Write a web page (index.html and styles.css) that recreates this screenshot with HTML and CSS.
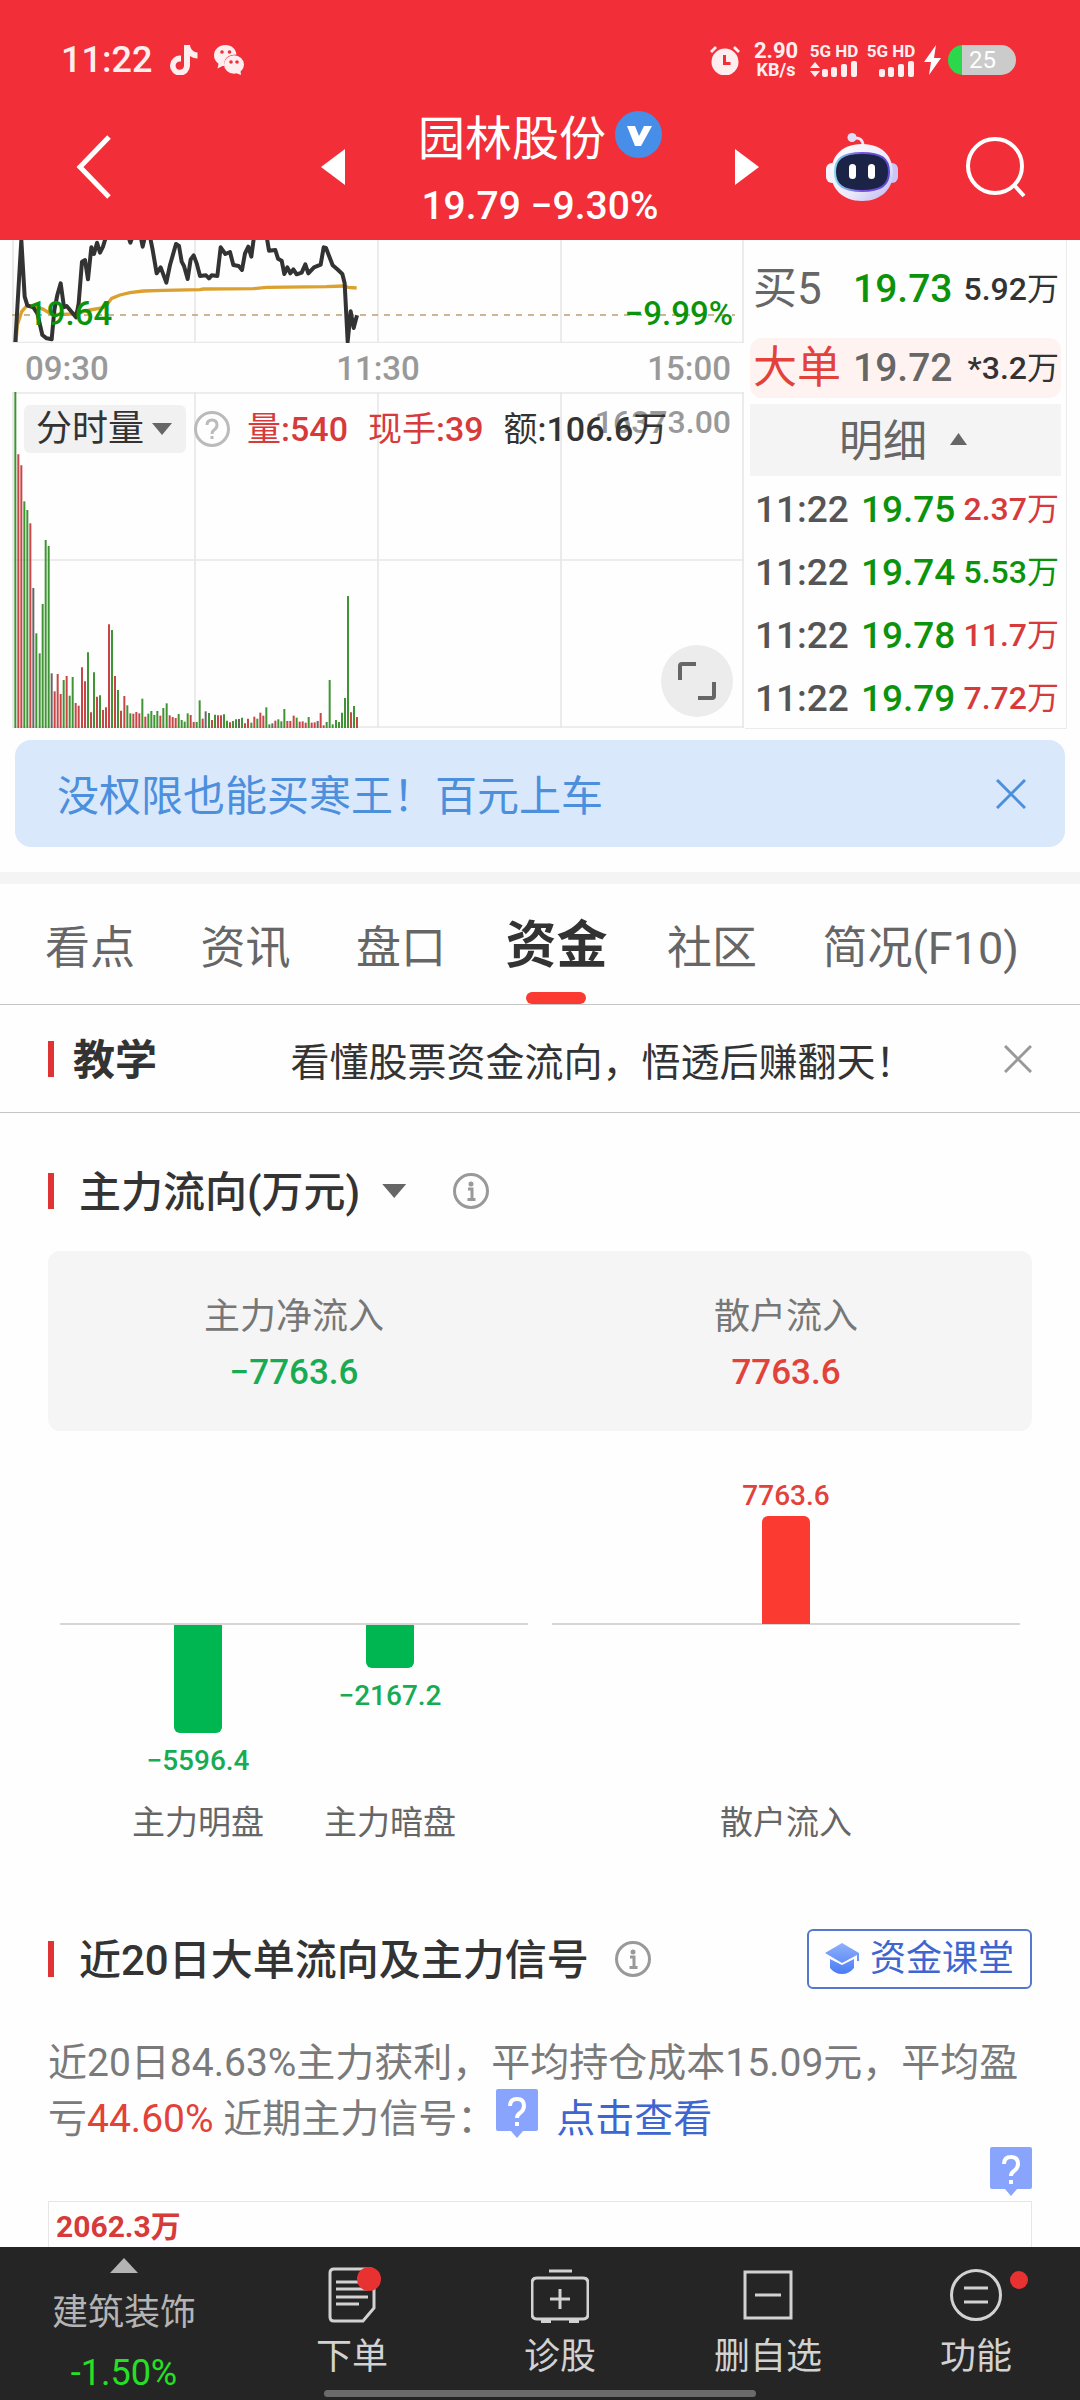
FILE: index.html
```html
<!DOCTYPE html>
<html lang="zh-CN">
<head>
<meta charset="utf-8">
<meta name="viewport" content="width=device-width, initial-scale=1">
<title>园林股份</title>
<link rel="stylesheet" href="styles.css">
</head>
<body>
<header class="top">
  <div class="status">
    <div class="status-side">
      <span class="clock">11:22</span>
      <svg class="app-icon" width="28" height="30" viewBox="0 0 28 30"><path d="M14 0h6c.4 4 3 7 7.500 7.400v6C24.500 13.400 22 12.500 20 11v9.500A10 10 0 1 1 11 10.600v6a4.200 4.200 0 1 0 3 4z"/></svg>
      <svg class="app-icon wechat" width="30" height="30" viewBox="0 0 30 30"><path d="M11.500 0C5 0 0 4.500 0 10.500c0 3.400 1.800 6.200 4.500 8.200L3.500 23.500l5-2.600h2C9 14 14 9.500 22.500 9.500 22 4 17.500 0 11.500 0z"/><ellipse cx="20" cy="19.500" rx="10" ry="9.300"/><path d="M22 28l5 2-.6-4.500z"/><g class="cut"><circle cx="8" cy="7" r="1.800"/><circle cx="15.500" cy="7" r="1.800"/><circle cx="17" cy="17" r="1.800"/><circle cx="23" cy="17" r="1.800"/></g></svg>
    </div>
    <div class="status-side">
      <svg class="app-icon" width="30" height="30" viewBox="0 0 30 30"><circle cx="15" cy="17" r="13.500"/><path d="M0 6L5 1l2 2-5 5zM30 6l-5-5-2 2 5 5z"/><path class="hand" d="M14.500 10v8.500h6"/></svg>
      <span class="speed"><b>2.90</b><small>KB/s</small></span>
      <span class="signal"><b>5G HD</b>
        <svg width="48" height="16" viewBox="0 0 48 16"><path d="M0 7l5-6 5 6zM0 10l5 6 5-6z"/><rect x="12" y="8" width="6" height="8" rx="2"/><rect x="21" y="6" width="6" height="10" rx="2"/><rect x="31" y="3" width="6" height="13" rx="2"/><rect x="41" width="6" height="16" rx="2"/></svg></span>
      <span class="signal"><b>5G HD</b>
        <svg width="48" height="16" viewBox="0 0 48 16"><rect x="12" y="8" width="6" height="8" rx="2"/><rect x="21" y="6" width="6" height="10" rx="2"/><rect x="31" y="3" width="6" height="13" rx="2"/><rect x="41" width="6" height="16" rx="2"/></svg></span>
      <svg class="bolt" width="18" height="30" viewBox="0 0 18 30"><path d="M12 0L0 17h7L5 30l12-17h-7z"/></svg>
      <span class="battery">25</span>
    </div>
  </div>
  <div class="title-bar">
    <div class="side side-left">
      <button class="icon-btn" aria-label="返回"><svg width="36" height="64" viewBox="0 0 36 64"><path class="line" d="M33 2L4 32l29 30"/></svg></button>
      <button class="icon-btn" aria-label="上一只"><svg width="24" height="36" viewBox="0 0 24 36"><path class="solid" d="M24 0v36L0 18z"/></svg></button>
    </div>
    <div class="stock">
      <h1>园林股份<svg width="47" height="47" viewBox="0 0 47 47"><circle cx="23.500" cy="23.500" r="23.500" fill="#468ee8"/><path fill="#fff" d="M12 15h8l4 10 5-10h8L26 35h-6z"/></svg></h1>
      <p>19.79 −9.30%</p>
    </div>
    <div class="side side-right">
      <button class="icon-btn" aria-label="下一只"><svg width="24" height="36" viewBox="0 0 24 36"><path class="solid" d="M0 0v36l24-18z"/></svg></button>
      <button class="icon-btn robot" aria-label="智能助手"><svg width="72" height="68" viewBox="0 0 72 68">
        <defs><linearGradient id="shell" x2="1" y2="1"><stop offset="0" stop-color="#fff"/><stop offset=".6" stop-color="#ece9fb"/><stop offset="1" stop-color="#b9b4ee"/></linearGradient><linearGradient id="rim" x2="1"><stop offset="0" stop-color="#7fd8f0"/><stop offset=".5" stop-color="#7a4fe0"/><stop offset="1" stop-color="#5a4bd0"/></linearGradient></defs>
        <path d="M28 5q9-1 9 8" fill="none" stroke="#e9e4fa" stroke-width="3"/><circle cx="26" cy="4.500" r="4.500" fill="#e2ddf7"/>
        <rect y="30" width="12" height="20" rx="6" fill="#f4f2fd"/><rect x="60" y="30" width="12" height="20" rx="6" fill="#c9c5f4"/>
        <path d="M36 11c22 0 31 14 31 29S56 68 36 68 5 55 5 40s9-29 31-29z" fill="url(#shell)"/>
        <path d="M36 20c20 0 27 6 27 19S55 58 36 58 9 52 9 39s7-19 27-19z" fill="#1b2346" stroke="url(#rim)" stroke-width="2"/>
        <rect x="23" y="31" width="7" height="15" rx="3.500" fill="#fff"/><rect x="42" y="31" width="7" height="15" rx="3.500" fill="#fff"/></svg></button>
      <button class="icon-btn" aria-label="搜索"><svg width="60" height="62" viewBox="0 0 60 62"><circle class="line ring" cx="29" cy="30" r="27"/><path class="line ring" d="M48 49l10 11"/></svg></button>
    </div>
  </div>
</header>

<main class="content">
  <section class="quote">
    <div class="charts">
      <div class="price-chart">
        <svg class="plot" viewBox="0 30 2235 309" preserveAspectRatio="none">
          <path class="grid" d="M39 30V339M585 30V339M1134 30V339M1683 30V339M2229 30V339M36 338H2232"/>
          <path class="avg" d="M48 336L52 285 65 245 80 228 110 230 130 238 150 250 175 254 215 252 245 246 270 240 315 232 335 205 360 195 390 188 430 183 490 181 600 179 610 177 760 176 800 172 980 170 1030 168 1045 172 1070 174"/>
          <path class="dash" d="M36 255H2205"/>
          <path class="price" d="M46 336L64 30 74 200 82 226 100 232 112 250 127 315 140 325 155 328 163 240 172 195 182 160 192 232 200 228 210 240 228 262 236 220 246 95 255 90 264 148 274 52 282 72 291 38 300 68 309 50 318 20 385 20 391 38 398 20 422 20 428 50 435 20 450 20 458 60 470 130 482 112 499 158 510 105 528 42 537 48 545 95 552 108 563 147 572 88 581 76 590 100 600 138 618 136 627 145 635 136 652 138 662 52 676 72 690 66 700 105 716 108 726 120 735 70 745 50 754 80 762 20 800 20 807 62 826 60 834 86 845 92 853 132 862 112 871 130 880 118 890 133 905 128 916 103 925 130 942 112 962 104 971 52 978 54 998 106 1012 118 1027 132 1034 160 1043 335 1052 244 1061 294 1071 256"/>
        </svg>
        <div class="limits"><span>19.64</span><span>−9.99%</span></div>
      </div>
      <div class="times"><span>09:30</span><span>11:30</span><span>15:00</span></div>
      <div class="volume-chart">
        <svg class="plot" id="volume" viewBox="0 486 2235 1011" preserveAspectRatio="none">
          <path class="grid" d="M39 486V1494M585 486V1494M1134 486V1494M1683 486V1494M2229 486V1494M36 489H2232M36 990H2232M36 1491H2232"/>
        </svg>
        <span class="max">16373.00</span>
        <div class="legend">
          <button class="pick">分时量<i class="down"></i></button>
          <svg class="help" width="36" height="36" viewBox="0 0 36 36"><circle cx="18" cy="18" r="16.500"/><path d="M13 14q0-5 5-5t5 5q0 3-3 5-2 1.500-2 4M18 25v3"/></svg>
          <span class="up">量<b>:540</b></span><span class="up">现手<b>:39</b></span><span>额<b>:106.6</b>万</span>
        </div>
        <button class="expand" aria-label="全屏"><svg width="38" height="38" viewBox="0 0 38 38"><path d="M2 18V4q0-2 2-2h14M36 20v14q0 2-2 2H20"/></svg></button>
      </div>
    </div>
    <div class="book">
      <table class="bids">
        <tr><th scope="row">买5</th><td class="fall strong">19.73</td><td class="qty"><b>5.92</b>万</td></tr>
        <tr class="big"><th scope="row">大单</th><td class="strong">19.72</td><td class="qty"><b>*3.2</b>万</td></tr>
      </table>
      <button class="detail">明细<i class="tri"></i></button>
      <table class="ticks">
        <tr><td>11:22</td><td class="fall">19.75</td><td class="qty up"><b>2.37</b>万</td></tr>
        <tr><td>11:22</td><td class="fall">19.74</td><td class="qty fall"><b>5.53</b>万</td></tr>
        <tr><td>11:22</td><td class="fall">19.78</td><td class="qty up"><b>11.7</b>万</td></tr>
        <tr><td>11:22</td><td class="fall">19.79</td><td class="qty up"><b>7.72</b>万</td></tr>
      </table>
    </div>
  </section>

  <aside class="banner"><a href="#">没权限也能买寒王！百元上车</a><button aria-label="关闭"><svg width="30" height="30" viewBox="0 0 30 30"><path d="M1 1l28 28M29 1L1 29"/></svg></button></aside>

  <nav class="tabs">
    <a href="#">看点</a><a href="#">资讯</a><a href="#">盘口</a><a href="#" class="active">资金</a><a href="#">社区</a><a href="#">简况(F10)</a>
  </nav>

  <section class="lesson"><h2 class="mark">教学</h2><a href="#">看懂股票资金流向，悟透后赚翻天！</a><button aria-label="关闭"><svg width="28" height="28" viewBox="0 0 28 28"><path d="M1 1l26 26M27 1L1 27"/></svg></button></section>

  <section class="flow">
    <div class="heading">
      <h2 class="mark">主力流向(万元)</h2><i class="down"></i>
      <svg class="info" width="36" height="36" viewBox="0 0 36 36"><circle cx="18" cy="18" r="16.500"/><path d="M15 16h4v10M14.500 26.500h8"/><circle class="dot" cx="18" cy="11" r="2.500"/></svg>
    </div>
    <dl class="summary">
      <div class="wide"><dt>主力净流入</dt><dd class="out">−7763.6</dd></div>
      <div><dt>散户流入</dt><dd class="in">7763.6</dd></div>
    </dl>
    <div class="bars">
      <div class="group">
        <figure><div class="above"></div><div class="below"><div class="bar" style="height:108px"></div><span>−5596.4</span></div><figcaption>主力明盘</figcaption></figure>
        <figure><div class="above"></div><div class="below"><div class="bar" style="height:43px"></div><span>−2167.2</span></div><figcaption>主力暗盘</figcaption></figure>
      </div>
      <div class="group">
        <figure><div class="above"><span>7763.6</span><div class="bar" style="height:108px"></div></div><div class="below"></div><figcaption>散户流入</figcaption></figure>
      </div>
    </div>
  </section>

  <section class="signals">
    <div class="heading">
      <h2 class="mark">近20日大单流向及主力信号</h2>
      <svg class="info" width="36" height="36" viewBox="0 0 36 36"><circle cx="18" cy="18" r="16.500"/><path d="M15 16h4v10M14.500 26.500h8"/><circle class="dot" cx="18" cy="11" r="2.500"/></svg>
      <button class="course"><svg width="34" height="32" viewBox="0 0 34 32"><defs><linearGradient id="cap" x2="0" y2="1"><stop offset="0" stop-color="#8fb0fb"/><stop offset="1" stop-color="#4a7cf4"/></linearGradient></defs><path fill="url(#cap)" d="M17 0L0 10l17 10 15-8v6h2v-8zM5 16v9q5 6 12 6t12-6v-9l-12 6z"/></svg>资金课堂</button>
    </div>
    <p class="note">近20日84.63%主力获利，平均持仓成本15.09元，平均盈亏<em>44.60%</em> 近期主力信号：<svg class="q" width="42" height="49" viewBox="0 0 42 49"><path d="M2 0h38q2 0 2 2v38q0 2-2 2H27l-6 7-6-7H2q-2 0-2-2V2q0-2 2-2z"/><path class="ask" d="M14 17q0-7 7-7t7 7q0 4-4 7-3 2-3 5M21 33v4"/></svg><a href="#">点击查看</a></p>
    <div class="flag"><svg class="q" width="42" height="49" viewBox="0 0 42 49"><path d="M2 0h38q2 0 2 2v38q0 2-2 2H27l-6 7-6-7H2q-2 0-2-2V2q0-2 2-2z"/><path class="ask" d="M14 17q0-7 7-7t7 7q0 4-4 7-3 2-3 5M21 33v4"/></svg></div>
    <div class="trend"><span>2062.3万</span></div>
  </section>
</main>

<nav class="bottom">
  <a href="#" class="sector"><i class="tri"></i><span>建筑装饰</span><span class="change">-1.50%</span></a>
  <a href="#"><span class="ico"><svg width="48" height="56" viewBox="0 0 48 56"><path d="M6 2h36q4 0 4 4v35L35 54H6q-4 0-4-4V6q0-4 4-4zM8 15h26M8 22h32M8 30h32M8 37h23"/></svg><i class="badge large"></i></span><span>下单</span></a>
  <a href="#"><span class="ico"><svg width="58" height="56" viewBox="0 0 58 56"><path d="M6 11h46q5 0 5 5v31q0 5-5 5H6q-5 0-5-5V16q0-5 5-5zM18 4h23M29 22v20M19 32h20"/><path class="foot" d="M10 54h10M38 54h10"/></svg></span><span>诊股</span></a>
  <a href="#"><span class="ico"><svg width="50" height="56" viewBox="0 0 50 56"><path d="M2 5h46v46H2zM12 28h26"/></svg></span><span>删自选</span></a>
  <a href="#"><span class="ico"><svg width="52" height="56" viewBox="0 0 52 56"><circle cx="26" cy="28" r="24.500"/><path d="M14 21h24M14 35h24"/></svg><i class="badge"></i></span><span>功能</span></a>
  <div class="home"></div>
</nav>
<script src="volume.js"></script>
</body>
</html>
```
FILE: styles.css
```css
* { box-sizing: border-box; margin: 0; padding: 0; }
body {
  display: flex; flex-direction: column; height: 100vh;
  font-family: Roboto, "Noto Sans CJK SC", sans-serif;
  color: #333; background: #fefefe; overflow: hidden;
}
button { border: 0; background: none; font: inherit; color: inherit; cursor: pointer; }
a { color: inherit; text-decoration: none; }
svg { display: block; flex: none; fill: none; }
i { display: inline-block; flex: none; }
.up { color: #d63a3a; }
.fall { color: #0b930b; }
.down { width: 20px; height: 12px; background: #666; clip-path: polygon(0 0, 100% 0, 50% 100%); }
.tri { width: 17px; height: 12px; background: #666; clip-path: polygon(50% 0, 100% 100%, 0 100%); }

/* Header */
.top { flex: none; color: #fff; background: #f22f38; }
.status { display: flex; justify-content: space-between; height: 80px; padding: 40px 64px 0 61px; }
.status-side { display: flex; align-items: center; height: 40px; }
.clock { font-size: 36px; font-weight: 500; line-height: 40px; color: #ffeeef; margin-right: 18px; }
.app-icon { fill: #ffeeef; }
.wechat { margin-left: 16px; }
.cut { fill: #f22f38; }
.hand { fill: none; stroke: #f22f38; stroke-width: 3; }
.speed, .signal { display: flex; flex-direction: column; align-items: center; color: #ffeeef; }
.speed { width: 46px; margin: 0 11px 0 13px; }
.speed b { font-size: 22px; line-height: 20px; }
.speed small { font-size: 18px; line-height: 18px; font-weight: 700; }
.signal { width: 48px; margin-right: 9px; }
.signal b { font-size: 17px; line-height: 16px; margin-bottom: 2px; white-space: nowrap; }
.signal svg { fill: #ffeeef; }
.bolt { fill: #fff; margin-right: 6px; }
.battery {
  width: 68px; height: 30px; border-radius: 15px; padding-left: 21px;
  font-size: 24px; line-height: 30px;
  background: linear-gradient(90deg, #2bd84b 14px, #cbcbcb 14px);
}
.title-bar { display: grid; grid-template-columns: 1fr auto 1fr; gap: 73px; height: 160px; }
.side { display: flex; align-items: center; justify-content: space-between; padding-top: 14px; }
.side-left { padding-left: 76px; }
.side-right { padding-right: 54px; }
.robot { margin-left: -2px; }
.line { stroke: #fff; stroke-width: 5; }
.ring { stroke-width: 4; }
.solid { fill: #fff; }
.stock { display: flex; flex-direction: column; align-items: center; padding-top: 26px; }
.stock h1 { display: flex; gap: 9px; align-items: center; font-size: 47px; line-height: 66px; font-weight: 400; white-space: nowrap; }
.stock h1 svg { margin-bottom: 10px; }
.stock p { font-size: 39px; line-height: 46px; font-weight: 500; margin-top: 11px; }

.content { flex: 1 1 0; min-height: 0; overflow: hidden; }

/* Quote */
.quote { display: flex; height: 489px; }
.charts { flex: 1; min-width: 0; }
.plot { width: 100%; height: 100%; }
.grid { stroke: #e8e8e8; stroke-width: 5; }
.price { stroke: #333; stroke-width: 12; stroke-linejoin: round; }
.avg { stroke: #dba02d; stroke-width: 10; }
.dash { stroke: #bd9f6c; stroke-width: 5; stroke-dasharray: 18 18; }
.price-chart, .volume-chart { position: relative; }
.price-chart { height: 103px; }
.limits { position: absolute; inset: 54px 12px auto 28px; display: flex; justify-content: space-between; color: #0b930b; font-size: 33px; line-height: 40px; font-weight: 500; }
.times { display: flex; justify-content: space-between; height: 49px; padding: 0 14px 0 25px; font-size: 33px; line-height: 52px; font-weight: 500; color: #999; }
.volume-chart { height: 337px; }
.max { position: absolute; top: 10px; right: 14px; font-size: 32px; line-height: 40px; font-weight: 500; color: #999; }
.legend { position: absolute; top: 12px; left: 24px; display: flex; align-items: center; gap: 20px; font-size: 34px; line-height: 50px; white-space: nowrap; }
.legend b, .qty b { font-weight: 500; }
.pick { display: flex; align-items: center; gap: 8px; height: 48px; padding: 0 14px 0 12px; border-radius: 6px; background: #f1f1f1; font-size: 36px; }
.help { margin: 0 -3px 0 -12px; stroke: #bbb; stroke-width: 3; }
.expand { position: absolute; right: 12px; bottom: 12px; display: grid; place-items: center; width: 72px; height: 72px; border-radius: 50%; background: #ececec; }
.expand svg { stroke: #666; stroke-width: 4; }
.book { flex: none; width: 322px; margin-right: 13px; padding: 0 5px; border: solid #ebebeb; border-width: 0 1px 1px 0; }
table { width: 100%; border-spacing: 0; table-layout: fixed; font-weight: 500; }
td, th { text-align: left; white-space: nowrap; }
.bids th { width: 103px; padding-left: 3px; font-size: 44px; font-weight: 400; color: #666; }
.bids tr { height: 98px; line-height: 96px; }
.bids .big { height: 60px; line-height: 60px; background: #fff3f2; color: #666; }
.bids .big th { color: #e2423a; border-radius: 12px 0 0 12px; }
.bids .big .qty { border-radius: 0 12px 12px 0; }
.strong { width: 98px; font-size: 39px; }
.qty { text-align: right; font-size: 32px; font-weight: 400; padding-right: 2px; }
.bids .qty { color: #333; }
.detail { display: flex; align-items: center; justify-content: center; gap: 23px; width: 100%; height: 72px; margin-top: 6px; padding-right: 5px; background: #f4f4f4; color: #666; font-size: 44px; line-height: 72px; padding-top: 4px; }
.detail .tri { margin-bottom: 6px; }
.ticks { color: #555; font-size: 37px; }
.ticks tr { height: 63px; line-height: 59px; }
.ticks td { padding-top: 4px; }
.ticks td:first-child { width: 111px; padding-left: 5px; }
.ticks td:nth-child(2) { width: 95px; }
.ticks .qty { font-size: 32px; }

/* Banner */
.banner { display: flex; align-items: center; justify-content: space-between; height: 107px; margin: 11px 15px 25px; padding: 0 39px 0 42px; border-radius: 16px; background: #dae8fb; color: #4b8fdd; font-size: 42px; line-height: 60px; }
.banner a { padding-top: 6px; }
.banner svg { stroke: #4b8fdd; stroke-width: 3; }

/* Tabs */
.tabs { display: flex; align-items: center; justify-content: space-between; height: 133px; padding: 0 61px 0 45px; border-top: 12px solid #f4f4f4; border-bottom: 1px solid #c5c5c5; color: #666; font-size: 45px; white-space: nowrap; }
.tabs .active { position: relative; font-size: 51px; font-weight: 700; color: #333; height: 120px; line-height: 124px; margin: 0 -6px; }
.active::after { content: ""; position: absolute; left: 50%; bottom: 0; width: 60px; height: 12px; margin-left: -30px; border-radius: 6px; background: #fb3b31; }

.lesson { display: flex; align-items: center; justify-content: space-between; height: 108px; padding: 0 48px; border-bottom: 1px solid #c5c5c5; font-size: 39px; }
.lesson a { margin-right: -44px; }
.lesson svg { stroke: #999; stroke-width: 3; }
.mark { display: flex; align-items: center; gap: 25px; font-size: 42px; line-height: 60px; font-weight: 500; white-space: nowrap; padding-top: 4px; }
.mark::before { content: ""; width: 6px; height: 36px; margin-bottom: 4px; background: #e03434; }
.lesson .mark { gap: 19px; font-weight: 700; }

/* Capital flow */
.flow, .signals { padding: 0 48px; }
.heading { display: flex; align-items: center; height: 60px; }
.flow .heading { margin-top: 48px; }
.flow .down { width: 24px; height: 14px; margin: 0 47px 0 22px; }
.info { stroke: #999; stroke-width: 3; }
.dot { fill: #999; stroke: none; }
.summary { display: flex; height: 180px; margin-top: 30px; padding-top: 38px; border-radius: 12px; background: #f5f5f5; text-align: center; }
.summary div { flex: 1; }
.summary dt { color: #777; font-size: 36px; line-height: 56px; }
.summary dd { font-size: 35px; line-height: 56px; font-weight: 500; }
.out { color: #17ab54; }
.in { color: #e2423a; }
.bars { display: grid; grid-template-columns: 1fr 1fr; gap: 24px; padding: 0 12px; }
.group { display: flex; justify-content: center; gap: 64px; background: linear-gradient(#d6d6d6, #d6d6d6) 0 192px / 100% 2px no-repeat; }
.group figure { display: flex; flex-direction: column; width: 128px; text-align: center; }
.above, .below { display: flex; flex-direction: column; align-items: center; font-size: 28px; line-height: 40px; font-weight: 500; }
.above { justify-content: flex-end; height: 193px; color: #e2423a; }
.below { height: 175px; padding-top: 1px; color: #17ab54; }
.below span { margin-top: 8px; }
.above .bar { width: 48px; border-radius: 6px 6px 0 0; background: #fb3b31; }
.below .bar { width: 48px; border-radius: 0 0 6px 6px; background: #00b650; }
figcaption { align-self: center; color: #666; font-size: 33px; line-height: 48px; white-space: nowrap; }

/* Signals */
.signals .heading { margin-top: 82px; }
.signals .info { margin-left: 26px; }
.course { display: flex; align-items: center; gap: 11px; height: 60px; margin-left: auto; padding: 0 16px; border: 2px solid #5478cc; border-radius: 6px; color: #3f66d0; font-size: 36px; line-height: 56px; white-space: nowrap; }
.note { margin-top: 46px; color: #7a7a7a; font-size: 39px; line-height: 56px; }
.note em { color: #e2423a; font-style: normal; }
.note a { color: #3f66d0; margin-left: 18px; }
.q { fill: #88a4fc; }
.note .q { display: inline-block; vertical-align: 14px; margin: -20px 0; }
.ask { stroke: #fff; stroke-width: 4; }
.flag { display: flex; justify-content: flex-end; margin-bottom: 5px; }
.trend { height: 400px; padding: 5px 7px; border: 1px solid #e6e6e6; color: #d63a3a; font-size: 30px; line-height: 40px; font-weight: 700; }

/* Bottom bar */
.bottom { position: relative; flex: none; display: grid; grid-template-columns: 248px repeat(4, 1fr); height: 153px; background: #252525; color: #d2d2d2; font-size: 36px; line-height: 48px; }
.bottom a { display: flex; flex-direction: column; align-items: center; padding-top: 20px; }
.bottom .sector { padding: 11px 0 0; color: #b4b4b4; }
.sector .tri { width: 28px; height: 15px; margin-bottom: 16px; background: #b4b4b4; }
.sector .change { margin-top: 12px; color: #25e025; }
.ico { position: relative; margin-bottom: 10px; }
.ico svg { stroke: #d2d2d2; stroke-width: 3; }
.foot { stroke-width: 4; }
.badge { position: absolute; top: 4px; right: -26px; width: 18px; height: 18px; border-radius: 50%; background: #e83232; }
.large { top: 0; right: -5px; width: 24px; height: 24px; }
.home { position: absolute; left: 30%; right: 30%; bottom: 3px; height: 7px; border-radius: 4px; background: #6b6b6b; }
```
FILE: volume.js
```js
// Per-minute volume since 09:30: top edge of each bar in plot units, then its direction.
const data = "486g 673r 706r 814g 840g 880r 1074k 1210g 1270g 1122g 930g 948g 1330k 1384r 1332r 1392r 1350g 1338r 1397g 1341g 1419r 1427r 1312r 1354r 1267g 1447r 1327g 1400r 1396g 1440r 1432r 1183r 1200g 1338r 1380g 1442r 1398r 1426g 1450g 1451r 1446r 1450r 1406g 1460r 1451g 1443g 1455g 1443g 1457r 1434g 1420g 1456r 1461r 1464r 1452g 1470g 1475g 1450g 1455r 1476r 1476g 1411g 1466r 1444k 1449g 1470r 1454g 1456r 1456r 1453g 1472g 1477r 1473g 1468g 1467k 1463g 1480r 1466r 1478g 1460r 1466g 1448r 1457r 1432g 1483g 1480k 1472r 1468g 1474g 1437g 1473r 1473r 1457r 1463g 1475r 1474r 1478r 1461g 1478r 1477r 1473k 1449r 1486r 1476g 1350g 1483g 1470g 1476g 1448g 1404g 1098g 1447r 1428g 1461r".split(" ");
const colors = { g: "#3f9433", r: "#c94646", k: "#666" };
const plot = document.getElementById("volume");
const step = (1071 - 46) / (data.length - 1);
data.forEach((item, i) => {
  const bar = document.createElementNS("http://www.w3.org/2000/svg", "path");
  bar.setAttribute("d", `M${Math.round(46 + i * step)} 1494V${parseInt(item, 10)}`);
  bar.setAttribute("stroke", colors[item.slice(-1)]);
  bar.setAttribute("stroke-width", 6);
  plot.append(bar);
});
```
